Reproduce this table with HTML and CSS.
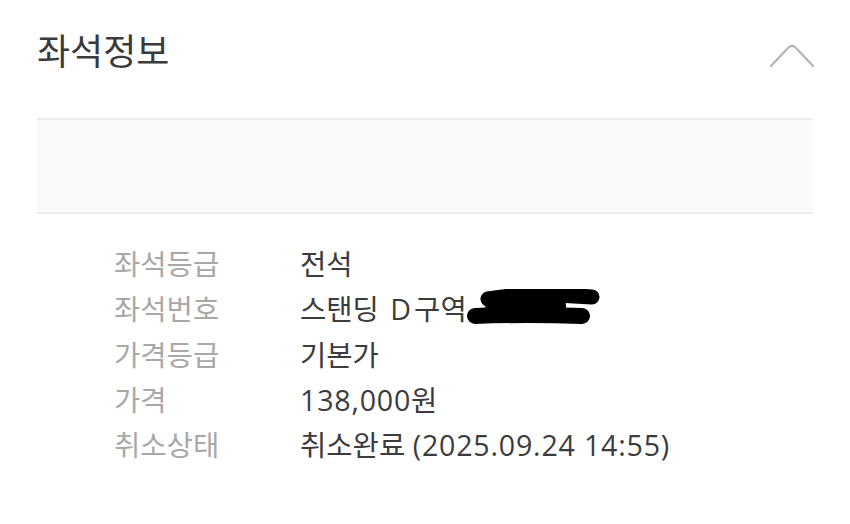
FILE: index.html
```html
<!DOCTYPE html>
<html>
	<head>
		<meta charset="utf-8" />
		<title>좌석정보</title>
		<link rel="stylesheet" href="styles.css">
	</head>
	<body>
		<div class="section">
			<div class="head">
				<h2 class="title">좌석정보</h2>
				<svg class="fold" width="46" height="26" viewBox="0 0 46 26">
					<path d="M2 23 L19 5 Q23 1 27 5 L44 23" fill="none" stroke="#b4b4b4" stroke-width="2.2" stroke-linecap="round"/>
				</svg>
			</div>
			<div class="blank"></div>
			<div class="info">
				<div class="row"><span class="label">좌석등급</span><span class="value">전석</span></div>
				<div class="row"><span class="label">좌석번호</span><span class="value">스탠딩 <span class="wide">D</span>구역<svg class="mask" width="134" height="38" viewBox="0 0 134 38"><path d="M22 10 Q60 3 126 8" fill="none" stroke="#000" stroke-width="15" stroke-linecap="round"/><path d="M9 27 Q60 25 116 27" fill="none" stroke="#000" stroke-width="16" stroke-linecap="round"/><path d="M20 14 L60 20 L100 18" fill="none" stroke="#000" stroke-width="14"/></svg></span></div>
				<div class="row"><span class="label">가격등급</span><span class="value">기본가</span></div>
				<div class="row"><span class="label">가격</span><span class="value"><span class="num">138,000</span>원</span></div>
				<div class="row"><span class="label">취소상태</span><span class="value">취소완료&nbsp;<span class="num">(2025.09.24 14:55)</span></span></div>
			</div>
		</div>
	</body>
</html>
```

FILE: styles.css
```css
body{
	margin: 0;
	background-color: #ffffff;
	font-family: "Open Sans", "Noto Sans CJK KR", sans-serif;
}
.section{
	padding: 0 37px;
}
.head{
	display: flex;
	justify-content: space-between;
	align-items: center;
	height: 106px;
}
.title{
	margin: 0;
	font-size: 36px;
	font-weight: normal;
	color: #3a3a3a;
	line-height: 1;
	padding-bottom: 2px;
}
.fold{
	margin-right: -2px;
	margin-top: 6px;
}
.blank{
	margin-top: 12px;
	height: 92px;
	background-color: #fafafa;
	border-top: 2px solid #ececec;
	border-bottom: 2px solid #ececec;
}
.info{
	padding: 27px 0 0 77px;
}
.row{
	display: flex;
	height: 45.3px;
	line-height: 45px;
	font-size: 28.6px;
	font-weight: normal;
}
.label{
	width: 186px;
	color: #a8a8a8;
}
.value{
	color: #3c3c3c;
	display: flex;
	align-items: center;
	white-space: pre;
}
.num{
	letter-spacing: 0.8px;
}
.wide{
	margin: 0 3px 0 4px;
}
.mask{
	margin-left: -1px;
	margin-top: -2px;
}
```
